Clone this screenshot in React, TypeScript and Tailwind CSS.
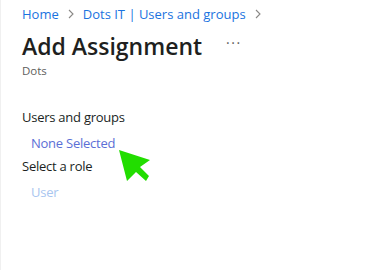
import React from "react";

export default function App() {
  return (
    <div
      className="w-[376px] h-[270px] bg-white border-l border-[#f0f0f0] relative overflow-hidden"
      style={{ fontFamily: '"Open Sans", "Noto Sans", sans-serif' }}
    >
      <div className="pl-[21px] pt-[5px]">
        <div className="flex items-center text-[13px] leading-[18px] text-[#1a73e0]">
          <span>Home</span>
          <svg width="8" height="10" viewBox="0 0 8 10" className="mx-[8px]">
            <path d="M2 1 L6 5 L2 9" fill="none" stroke="#8a8886" strokeWidth="1.1" />
          </svg>
          <span>Dots IT | Users and groups</span>
          <svg width="8" height="10" viewBox="0 0 8 10" className="mx-[8px]">
            <path d="M2 1 L6 5 L2 9" fill="none" stroke="#8a8886" strokeWidth="1.1" />
          </svg>
        </div>
        <div className="flex items-center mt-[8px]">
          <span className="text-[23px] leading-[30px] font-semibold text-[#201f1e]">Add Assignment</span>
          <span className="ml-[24px] text-[14px] leading-[14px] text-[#605e5c] tracking-[1.5px] -mt-[6px]">···</span>
        </div>
        <div className="text-[11.5px] leading-[16px] text-[#605e5c] mt-[2px]">Dots</div>
        <div className="text-[13px] tracking-[-0.25px] leading-[18px] text-[#201f1e] mt-[29px]">Users and groups</div>
        <div className="text-[13px] tracking-[-0.25px] leading-[18px] text-[#5b6fd6] mt-[8px] ml-[9px]">None Selected</div>
        <div className="text-[13px] tracking-[-0.25px] leading-[18px] text-[#201f1e] mt-[5px]">Select a role</div>
        <div className="text-[13px] tracking-[-0.25px] leading-[18px] text-[#a9c6f0] mt-[8px] ml-[9px]">User</div>
      </div>
      <svg
        className="absolute left-[117px] top-[149px]"
        width="34"
        height="36"
        viewBox="0 0 34 36"
      >
        <path d="M1 1 L32 11 L22 18 L31 27 L28 32 L18 23 L9 32 Z" fill="#22dd00" />
      </svg>
    </div>
  );
}
